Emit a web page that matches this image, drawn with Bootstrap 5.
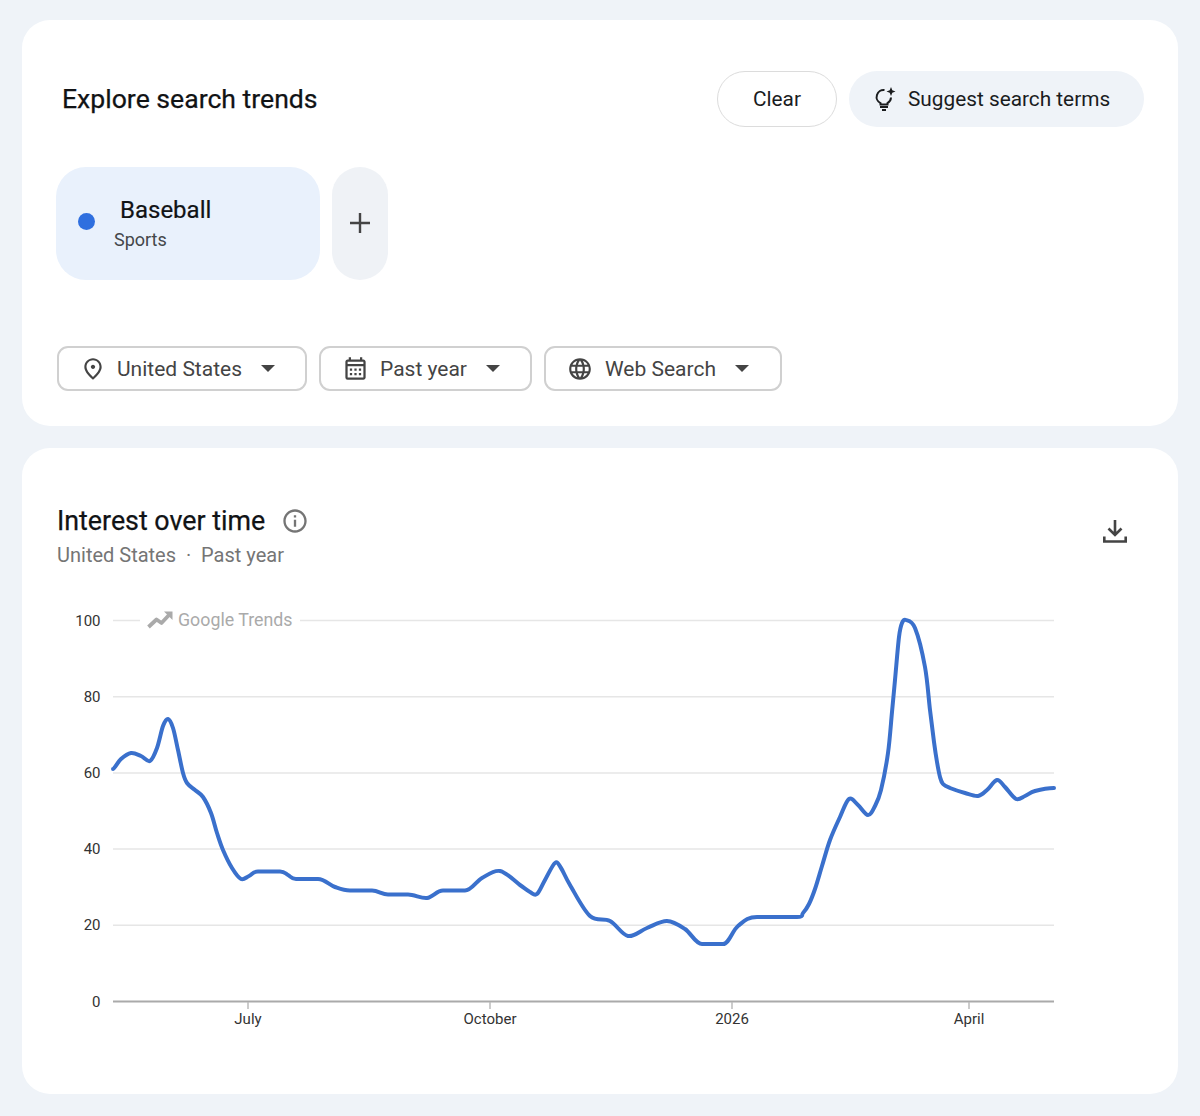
<!DOCTYPE html>
<html lang="en">
<head>
    <meta charset="UTF-8">
    <meta name="viewport" content="width=device-width, initial-scale=1.0">
    <title>Explore search trends</title>
    <link href="https://cdn.jsdelivr.net/npm/bootstrap@5.3.2/dist/css/bootstrap.min.css" rel="stylesheet">
    <style>
        body { background: #eff3f8; font-family: Roboto, "Liberation Sans", sans-serif; color: #1f1f1f; margin: 0; }
        .page-wrap { padding: 20px 22px 22px; }
        .panel { background: #fff; border-radius: 28px; }
        .panel-explore { height: 406px; padding: 51px 34px 0; margin-bottom: 22px; }
        .panel-chart { height: 646px; padding: 57px 0 0 35px; position: relative; }
        .explore-head { height: 56px; padding-left: 6px; }
        .explore-title { font-size: 26.6px; font-weight: 400; margin: 0; color: #111315; -webkit-text-stroke: .25px #111315; }
        .btn-pill { height: 56px; border-radius: 28px; font-size: 20.8px; font-weight: 400; color: #1a1c1e; padding: 2px 0 0; }
        .btn-clear { width: 120px; border: 1px solid #dcdcdc; background: #fff; }
        .btn-suggest { width: 295px; background: #eff3f8; border: 0; padding-left: 24px; gap: 9px; }
        .btn-suggest svg { margin-top: -2px; }
        .chip-row { margin-top: 40px; gap: 12px; }
        .term-chip { width: 264px; height: 113px; background: #e9f1fc; border-radius: 30px; padding-left: 22px; }
        .term-dot { width: 17px; height: 17px; border-radius: 50%; background: #2f6fdf; margin-right: 19px; margin-bottom: 4px; }
        .term-text { padding-top: 3px; }
        .term-name { font-size: 24px; font-weight: 400; margin-left: 6px; line-height: 29px; color: #111315; -webkit-text-stroke: .2px #111315; }
        .term-cat { font-size: 18px; line-height: 29px; color: #44474a; }
        .btn-add { width: 56px; height: 113px; border-radius: 28px; background: #eff2f6; border: 0; padding: 0 0 2px; }
        .filter-row { margin-top: 66px; margin-left: 1px; gap: 12px; }
        .btn-filter { height: 45px; border: 2px solid #d0d0d0; border-radius: 11px; background: #fff; color: #444; font-size: 21px; padding: 0 0 0 21px; }
        .btn-filter .filter-label { margin-left: 11px; padding-top: 2px; }
        .btn-filter .filter-caret { width: 0; height: 0; border-left: 7px solid transparent; border-right: 7px solid transparent; border-top: 7px solid #444; margin-left: 19px; }
        .filter-place { width: 250px; }
        .filter-time { width: 213px; }
        .filter-source { width: 238px; }
        .filter-source .filter-label { margin-left: 12px; }
        .chart-head { height: 95px; }
        .chart-title { font-size: 26.8px; font-weight: 400; line-height: 32px; margin: 0; color: #111315; -webkit-text-stroke: .25px #111315; }
        .chart-sub { font-size: 20px; line-height: 30px; margin-top: 3px; color: #757575; }
        .btn-download { position: absolute; right: 50px; top: 70px; border: 0; padding: 0; background: none; line-height: 0; }
        .trend-svg { display: block; width: 1010px; height: 430px; font-family: Roboto, "Liberation Sans", sans-serif; }
        .trend-svg .grid { stroke: #e6e6e6; stroke-width: 1.5; }
        .trend-svg .axis { stroke: #aaa; stroke-width: 2; }
        .trend-svg .tick { stroke: #bbb; stroke-width: 1.5; }
        .trend-svg text { font-size: 15px; fill: #333; }
        .trend-svg .watermark { font-size: 17.8px; fill: #aaa; }
    </style>
</head>
<body>
    <div class="page-wrap">

        <!-- Search terms and filters -->
        <div class="panel panel-explore">
            <div class="explore-head d-flex align-items-center justify-content-between">
                <h1 class="explore-title">Explore search trends</h1>
                <div class="d-flex gap-2">
                    <button class="btn btn-pill btn-clear d-flex align-items-center justify-content-center me-1">Clear</button>
                    <button class="btn btn-pill btn-suggest d-flex align-items-center">
                        <svg width="26" height="26" viewBox="0 0 26 26" fill="none" stroke="#1a1c1e" stroke-width="2">
                            <path d="M11.500 4A7 7 0 0 0 7.500 17.200V18.500h7v-1.300A7 7 0 0 0 18 11.500"/>
                            <path d="M7 21h8M9 24h4"/>
                            <path d="M18 1l1.300 3.200L22.500 5.500l-3.200 1.300L18 10l-1.300-3.200L13.500 5.500l3.200-1.300z" fill="#1a1c1e" stroke="none"/>
                        </svg>
                        Suggest search terms
                    </button>
                </div>
            </div>

            <div class="chip-row d-flex">
                <div class="term-chip d-flex align-items-center">
                    <span class="term-dot"></span>
                    <div class="term-text">
                        <div class="term-name">Baseball</div>
                        <div class="term-cat">Sports</div>
                    </div>
                </div>
                <button class="btn btn-add d-flex align-items-center justify-content-center">
                    <svg width="24" height="24" viewBox="0 0 24 24" fill="none" stroke="#444" stroke-width="2.400"><path d="M12 2v20M2 12h20"/></svg>
                </button>
            </div>

            <div class="filter-row d-flex">
                <button class="btn btn-filter filter-place d-flex align-items-center">
                    <svg width="26" height="26" viewBox="0 0 24 24" fill="#444"><path d="M12 12c-1.100 0-2-.9-2-2s.9-2 2-2 2 .9 2 2-.9 2-2 2zm6-1.800C18 6.570 15.350 4 12 4s-6 2.570-6 6.200c0 2.340 1.950 5.440 6 9.140 4.050-3.700 6-6.800 6-9.140zM12 2c4.200 0 8 3.220 8 8.200 0 3.320-2.670 7.250-8 11.800-5.330-4.550-8-8.480-8-11.800C4 5.220 7.800 2 12 2z"/></svg>
                    <span class="filter-label">United States</span>
                    <span class="filter-caret"></span>
                </button>
                <button class="btn btn-filter filter-time d-flex align-items-center">
                    <svg width="27" height="27" viewBox="0 0 24 24" fill="#444"><path d="M19 4h-1V2h-2v2H8V2H6v2H5c-1.110 0-1.990.9-1.990 2L3 20a2 2 0 0 0 2 2h14c1.100 0 2-.9 2-2V6c0-1.100-.9-2-2-2zm0 16H5V10h14v10zm0-12H5V6h14v2zM9 14H7v-2h2v2zm4 0h-2v-2h2v2zm4 0h-2v-2h2v2zm-8 4H7v-2h2v2zm4 0h-2v-2h2v2zm4 0h-2v-2h2v2z"/></svg>
                    <span class="filter-label">Past year</span>
                    <span class="filter-caret"></span>
                </button>
                <button class="btn btn-filter filter-source d-flex align-items-center">
                    <svg width="26" height="26" viewBox="0 0 24 24" fill="#444"><path d="M11.990 2C6.470 2 2 6.480 2 12s4.470 10 9.990 10C17.520 22 22 17.520 22 12S17.520 2 11.990 2zm6.930 6h-2.950c-.32-1.250-.78-2.450-1.380-3.560 1.840.63 3.370 1.910 4.330 3.560zM12 4.040c.83 1.200 1.480 2.530 1.910 3.960h-3.820c.43-1.430 1.080-2.760 1.910-3.960zM4.260 14C4.100 13.360 4 12.690 4 12s.1-1.360.26-2h3.380c-.08.66-.14 1.320-.14 2s.06 1.340.14 2H4.260zm.82 2h2.950c.32 1.250.78 2.450 1.380 3.560-1.840-.63-3.370-1.900-4.330-3.560zm2.950-8H5.080c.96-1.660 2.490-2.930 4.330-3.560C8.810 5.550 8.350 6.750 8.030 8zM12 19.960c-.83-1.200-1.480-2.530-1.910-3.960h3.820c-.43 1.430-1.080 2.760-1.910 3.960zM14.340 14H9.660c-.09-.66-.16-1.320-.16-2s.07-1.350.16-2h4.680c.09.65.16 1.320.16 2s-.07 1.340-.16 2zm.25 5.560c.6-1.110 1.060-2.310 1.380-3.560h2.950c-.96 1.650-2.490 2.930-4.330 3.560zM16.360 14c.08-.66.14-1.320.14-2s-.06-1.340-.14-2h3.380c.16.64.26 1.310.26 2s-.1 1.360-.26 2h-3.380z"/></svg>
                    <span class="filter-label">Web Search</span>
                    <span class="filter-caret"></span>
                </button>
            </div>
        </div>

        <!-- Chart -->
        <div class="panel panel-chart">
            <div class="chart-head">
                <div class="d-flex align-items-center gap-3">
                    <h2 class="chart-title">Interest over time</h2>
                    <svg width="28" height="28" viewBox="0 0 24 24" fill="#757575"><path d="M11 7h2v2h-2zm0 4h2v6h-2zm1-9C6.480 2 2 6.480 2 12s4.480 10 10 10 10-4.480 10-10S17.520 2 12 2zm0 18c-4.410 0-8-3.590-8-8s3.590-8 8-8 8 3.590 8 8-3.590 8-8 8z"/></svg>
                </div>
                <div class="chart-sub">United States &nbsp;·&nbsp; Past year</div>
            </div>
            <button class="btn btn-download">
                <svg width="26" height="26" viewBox="0 0 26 26" fill="none" stroke="#444" stroke-width="2.600"><path d="M13 2v15M6.500 10.500L13 17l6.500-6.500"/><path d="M2.300 18.500v5h21.400v-5"/></svg>
            </button>

            <svg class="trend-svg" viewBox="57 600 1010 430">
                <g id="gridLines"></g>
                <g id="xAxis"></g>
                <path d="M148.500 627l8-7.500 5 3.500 7.500-8" fill="none" stroke="#aaa" stroke-width="3.800" stroke-linejoin="round"/>
                <path d="M164 611.500h8.500v8.500z" fill="#aaa"/>
                <text class="watermark" x="178" y="625.500">Google Trends</text>
                <path id="trendLine" fill="none" stroke="#3a70cc" stroke-width="4" stroke-linecap="round" stroke-linejoin="round"/>
            </svg>
        </div>
    </div>

    <script src="https://cdn.jsdelivr.net/npm/bootstrap@5.3.2/dist/js/bootstrap.bundle.min.js"></script>
    <script>
        const NS = 'http://www.w3.org/2000/svg';

        function addSvg(parent, tag, attrs, text) {
            const el = document.createElementNS(NS, tag);
            for (const k in attrs) el.setAttribute(k, attrs[k]);
            if (text !== undefined) el.textContent = text;
            parent.appendChild(el);
        }

        // y gridlines, the 100 line leaves room for the watermark
        const gridLines = document.getElementById('gridLines');
        [100, 80, 60, 40, 20, 0].forEach(v => {
            const y = 1001.5 - v * 3.81;
            addSvg(gridLines, 'text', { x: 100.5, y: y + 5, 'text-anchor': 'end' }, v);
            if (v === 0) return;
            if (v === 100) {
                addSvg(gridLines, 'line', { class: 'grid', x1: 113, x2: 140, y1: y, y2: y });
                addSvg(gridLines, 'line', { class: 'grid', x1: 300, x2: 1054, y1: y, y2: y });
            } else {
                addSvg(gridLines, 'line', { class: 'grid', x1: 113, x2: 1054, y1: y, y2: y });
            }
        });

        const xAxis = document.getElementById('xAxis');
        addSvg(xAxis, 'line', { class: 'axis', x1: 113, x2: 1054, y1: 1001.5, y2: 1001.5 });
        [[248, 'July'], [490, 'October'], [732, '2026'], [969, 'April']].forEach(([x, label]) => {
            addSvg(xAxis, 'line', { class: 'tick', x1: x, x2: x, y1: 1002, y2: 1009 });
            addSvg(xAxis, 'text', { x: x, y: 1024, 'text-anchor': 'middle' }, label);
        });

        // points read off the chart, in page pixels
        const points = [
            [113,769],[121,759],[131,753],[141,756],[150,761],[157,748],[163,726],[168,719],[173,728],[178,750],
            [183,773],[187,783],[195,790],[203,797],[211,813],[217,833],[223,850],[232,868],[241,879],[249,876],
            [258,871.5],[280,871.5],[288,875],[296,879],[318,879],[335,887],[350,890.5],[372,890.5],[388,894.5],[408,894.5],
            [427,898],[443,890.5],[465,890.5],[482,878],[500,871],[520,885],[530,892],[537,894],[545,880],[555,863],[561,868],[570,885],
            [590,916],[610,921],[628,936],[647,928],[667,921],[685,929],[702,944],[723,944],[738,926],[757,917],[797,917],
            [803,913],[809,904],[815,889],[822,866],[830,840],[840,817],[849,799],[858,805],[868,815],[875,806],[881,790],[888,753],
            [892,712],[895,680],[899,637],[902,623],[906,620],[915,628],[925,667],[930,710],[934,742],[937,762],[940,777],[943,784],
            [950,788],[965,793],[978,796],[987,790],[997,780],[1005,787],[1016,799],[1025,796],[1035,791],[1054,788]
        ];

        // catmull-rom tangent, zero slope where the line runs flat so it doesn't overshoot
        function tangent(i) {
            const a = points[Math.max(i - 1, 0)];
            const b = points[i];
            const c = points[Math.min(i + 1, points.length - 1)];
            const flat = a[1] === b[1] || b[1] === c[1];
            return [(c[0] - a[0]) / 6, flat ? 0 : (c[1] - a[1]) / 6];
        }

        let d = `M${points[0][0]} ${points[0][1]}`;
        for (let i = 0; i < points.length - 1; i++) {
            const p1 = points[i];
            const p2 = points[i + 1];
            const t1 = tangent(i);
            const t2 = tangent(i + 1);
            d += ` C${p1[0] + t1[0]} ${p1[1] + t1[1]} ${p2[0] - t2[0]} ${p2[1] - t2[1]} ${p2[0]} ${p2[1]}`;
        }
        document.getElementById('trendLine').setAttribute('d', d);
    </script>
</body>
</html>
